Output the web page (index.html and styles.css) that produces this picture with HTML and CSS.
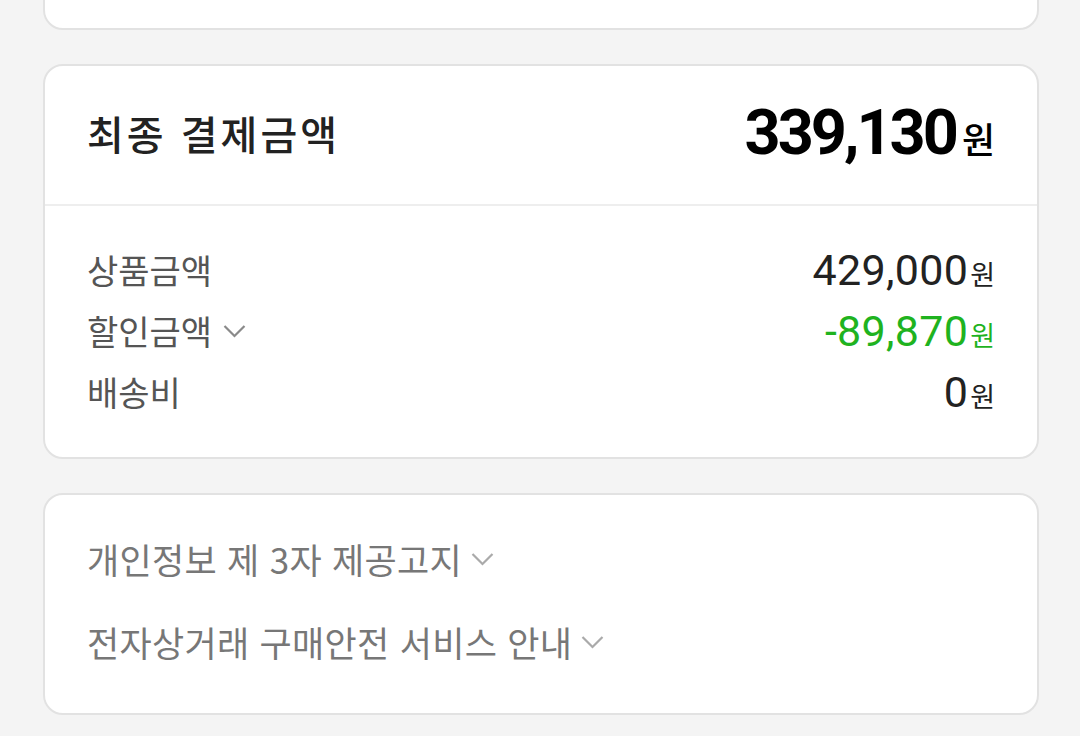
FILE: index.html
```html
<!DOCTYPE html>
<html lang="ko">
<head>
  <meta charset="UTF-8" />
  <meta name="viewport" content="width=device-width, initial-scale=1.0"/>
  <title>주문서 | 결제</title>
  <link rel="stylesheet" href="styles.css">
</head>
<body>

  <div class="container">

    <div class="card card-prev"></div>

    <div class="card">
      <div class="total">
        <h3>최종 결제금액</h3>
        <div class="total-price">339,130<span class="won">원</span></div>
      </div>
      <div class="details">
        <div class="row">
          <span class="label">상품금액</span>
          <span class="value">429,000<span class="won">원</span></span>
        </div>
        <div class="row">
          <span class="label">할인금액
            <svg class="chevron" viewBox="0 0 24 14"><path d="M2 2l10 10 10-10"/></svg>
          </span>
          <span class="value discount">-89,870<span class="won">원</span></span>
        </div>
        <div class="row">
          <span class="label">배송비</span>
          <span class="value">0<span class="won">원</span></span>
        </div>
      </div>
    </div>

    <div class="card notice">
      <div class="notice-item">개인정보 제 3자 제공고지
        <svg class="chevron" viewBox="0 0 24 14"><path d="M2 2l10 10 10-10"/></svg>
      </div>
      <div class="notice-item">전자상거래 구매안전 서비스 안내
        <svg class="chevron" viewBox="0 0 24 14"><path d="M2 2l10 10 10-10"/></svg>
      </div>
    </div>

  </div>

</body>
</html>
```

FILE: styles.css
```css
:root {
  --bg: #f4f4f4;
  --card: #ffffff;
  --border: #e2e2e2;
  --text: #222222;
  --muted: #555555;
  --soft: #777777;
  --green: #1fb31f;
}

* { box-sizing: border-box; }

body {
  margin: 0;
  background: var(--bg);
  color: var(--text);
  font-family: 'Noto Sans CJK KR', 'Noto Sans', sans-serif;
  overflow: hidden;
}

.container {
  width: 996px;
  margin-left: 43px;
  display: flex;
  flex-direction: column;
  gap: 34px;
}

.card {
  background: var(--card);
  border: 2px solid var(--border);
  border-radius: 20px;
  overflow: hidden;
}

.card-prev {
  height: 80px;
  margin-top: -50px;
}

.total {
  display: flex;
  justify-content: space-between;
  align-items: center;
  height: 140px;
  padding: 0 42px 5px;
  border-bottom: 2px solid #eeeeee;
}

.total h3 {
  margin: 0;
  font-size: 40px;
  font-weight: 500;
  color: var(--text);
  letter-spacing: 3px;
}

.total-price {
  font-family: Roboto, 'Noto Sans CJK KR', sans-serif;
  font-size: 63px;
  font-weight: 700;
  letter-spacing: -3px;
  color: #000;
  display: flex;
  align-items: baseline;
}

.total-price .won {
  font-family: 'Noto Sans CJK KR', sans-serif;
  font-size: 36px;
  font-weight: 500;
  letter-spacing: 0;
  margin-left: 6px;
}

.details {
  padding: 33px 42px 35px;
  display: flex;
  flex-direction: column;
}

.row {
  display: flex;
  justify-content: space-between;
  align-items: center;
  height: 61px;
}

.label {
  font-size: 34px;
  color: var(--muted);
  letter-spacing: 0;
  display: flex;
  align-items: center;
}

.value {
  font-family: Roboto, 'Noto Sans CJK KR', sans-serif;
  font-size: 43px;
  color: var(--text);
  letter-spacing: 0.3px;
  display: flex;
  align-items: baseline;
}

.value .won {
  font-family: 'Noto Sans CJK KR', sans-serif;
  font-size: 27px;
  letter-spacing: 0;
  margin-left: 2px;
}

.discount {
  color: var(--green);
}

.chevron {
  width: 25px;
  height: 14px;
  fill: none;
  stroke: #8a8a8a;
  stroke-width: 2.2;
  margin-left: 10px;
}

.notice {
  padding: 22px 42px 36px;
  height: 222px;
}

.notice-item {
  display: flex;
  align-items: center;
  font-size: 35px;
  color: var(--soft);
  letter-spacing: 0.3px;
  height: 83px;
}

.notice-item .chevron {
  stroke: #aaaaaa;
  margin-left: 8px;
}
```
